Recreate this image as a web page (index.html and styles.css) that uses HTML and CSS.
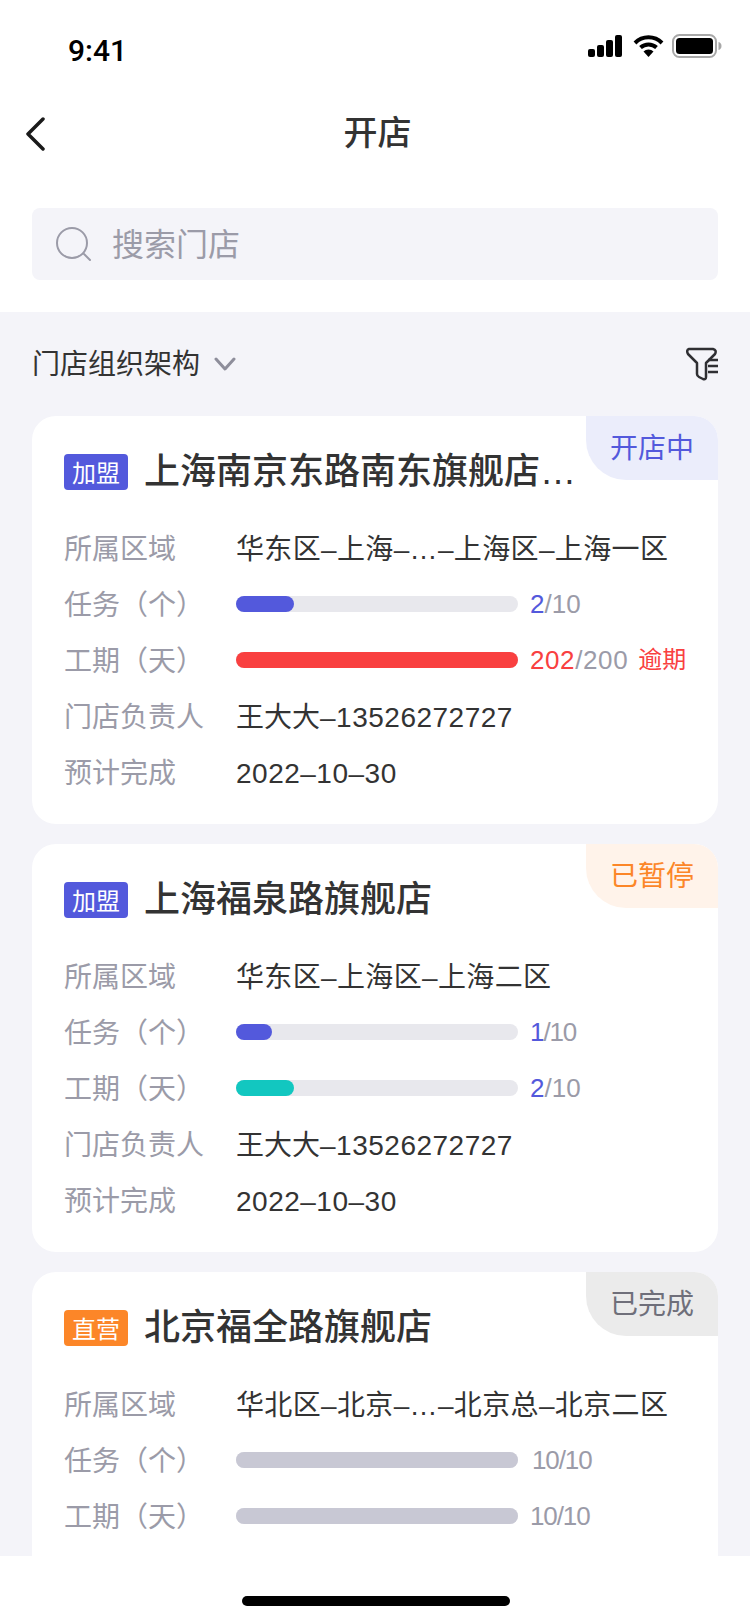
FILE: index.html
```html
<!DOCTYPE html>
<html lang="zh-CN">
<head>
<meta charset="UTF-8">
<meta name="viewport" content="width=device-width, initial-scale=1.0">
<title>开店</title>
<link rel="stylesheet" href="styles.css">
</head>
<body>
<div class="page">
  <div class="status-bar">
    <span class="time">9:41</span>
    <div class="status-icons">
      <svg width="35" height="22" viewBox="0 0 35 22"><rect x="0" y="14" width="7" height="8" rx="2"/><rect x="9" y="10" width="7" height="12" rx="2"/><rect x="18" y="5" width="7" height="17" rx="2"/><rect x="27" y="0" width="7" height="22" rx="2"/></svg>
      <svg width="31" height="22" viewBox="0 0 31 22"><path d="M2 8 A19 19 0 0 1 29 8" fill="none" stroke="#000" stroke-width="4"/><path d="M7.500 12.500 A12 12 0 0 1 23.500 12.500" fill="none" stroke="#000" stroke-width="4"/><path d="M10.500 16.500 L15.500 22 L20.500 16.500 A7 7 0 0 0 10.500 16.500 Z"/></svg>
      <svg class="battery" width="50" height="24" viewBox="0 0 50 24"><rect x="1" y="1" width="43" height="22" rx="6.500" fill="none" stroke="#a8a8a8" stroke-width="2"/><rect x="4" y="4" width="37" height="16" rx="3.500"/><path d="M46.500 8 C48.500 8.500 49.500 10 49.500 12 C49.500 14 48.500 15.500 46.500 16 Z" fill="#a8a8a8"/></svg>
    </div>
  </div>

  <div class="nav-bar">
    <svg class="back" width="20" height="34" viewBox="0 0 20 34"><path d="M18 2 L3 17 L18 32" fill="none" stroke="#1a1a1a" stroke-width="3.500" stroke-linecap="round" stroke-linejoin="round"/></svg>
    <h1>开店</h1>
  </div>

  <div class="search-wrap">
    <div class="search">
      <svg width="36" height="34" viewBox="0 0 36 34"><circle cx="16" cy="16" r="15" fill="none" stroke="#9b9ba8" stroke-width="2"/><path d="M28 27 L34 33" stroke="#9b9ba8" stroke-width="2" stroke-linecap="round"/></svg>
      <span>搜索门店</span>
    </div>
  </div>

  <div class="content">
    <div class="filter-row">
      <div class="org">
        <span>门店组织架构</span>
        <svg width="22" height="14" viewBox="0 0 22 14"><path d="M2 2 L11 12 L20 2" fill="none" stroke="#8e8e9b" stroke-width="3" stroke-linecap="round" stroke-linejoin="round"/></svg>
      </div>
      <svg width="32" height="34" viewBox="0 0 32 34"><path d="M3 2 H27 Q31 3 29 7 L20 16 V30 Q20 33 17 32 L13 30 Q11 29 11 27 V16 L2 7 Q0 3 3 2 Z" fill="none" stroke="#2f2f33" stroke-width="2.500" stroke-linejoin="round"/><path d="M22 13 H32 M22 19 H32 M22 25 H32" stroke="#2f2f33" stroke-width="2.500" fill="none"/></svg>
    </div>

    <div class="card">
      <span class="state state-open">开店中</span>
      <div class="card-title">
        <span class="badge badge-join">加盟</span>
        <h2>上海南京东路南东旗舰店…</h2>
      </div>
      <div class="row"><span class="label">所属区域</span><span class="value value-area">华东区–上海–…–上海区–上海一区</span></div>
      <div class="row">
        <span class="label">任务（个）</span>
        <div class="bar"><div class="fill fill-blue" style="width: 58px"></div></div>
        <span class="count"><em class="blue">2</em>/10</span>
      </div>
      <div class="row">
        <span class="label">工期（天）</span>
        <div class="bar"><div class="fill fill-red" style="width: 100%"></div></div>
        <span class="count count-wide"><em class="red">202</em>/200</span>
        <span class="late">逾期</span>
      </div>
      <div class="row"><span class="label">门店负责人</span><span class="value">王大大<span class="num">–13526272727</span></span></div>
      <div class="row"><span class="label">预计完成</span><span class="value"><span class="num">2022–10–30</span></span></div>
    </div>

    <div class="card">
      <span class="state state-paused">已暂停</span>
      <div class="card-title">
        <span class="badge badge-join">加盟</span>
        <h2>上海福泉路旗舰店</h2>
      </div>
      <div class="row"><span class="label">所属区域</span><span class="value value-area">华东区–上海区–上海二区</span></div>
      <div class="row">
        <span class="label">任务（个）</span>
        <div class="bar"><div class="fill fill-blue" style="width: 36px"></div></div>
        <span class="count count-narrow"><em class="blue">1</em>/10</span>
      </div>
      <div class="row">
        <span class="label">工期（天）</span>
        <div class="bar"><div class="fill fill-teal" style="width: 58px"></div></div>
        <span class="count"><em class="blue">2</em>/10</span>
      </div>
      <div class="row"><span class="label">门店负责人</span><span class="value">王大大<span class="num">–13526272727</span></span></div>
      <div class="row"><span class="label">预计完成</span><span class="value"><span class="num">2022–10–30</span></span></div>
    </div>

    <div class="card">
      <span class="state state-done">已完成</span>
      <div class="card-title">
        <span class="badge badge-direct">直营</span>
        <h2>北京福全路旗舰店</h2>
      </div>
      <div class="row"><span class="label">所属区域</span><span class="value value-area">华北区–北京–…–北京总–北京二区</span></div>
      <div class="row">
        <span class="label">任务（个）</span>
        <div class="bar"><div class="fill fill-grey" style="width: 100%"></div></div>
        <span class="count count-narrow count-done">10/10</span>
      </div>
      <div class="row">
        <span class="label">工期（天）</span>
        <div class="bar"><div class="fill fill-grey" style="width: 100%"></div></div>
        <span class="count count-narrow">10/10</span>
      </div>
    </div>
  </div>

  <div class="home-bar"><div class="home-indicator"></div></div>
</div>
</body>
</html>
```

FILE: styles.css
```css
* {
  box-sizing: border-box;
}

body {
  margin: 0;
  font-family: "Liberation Sans", "Noto Sans CJK SC", sans-serif;
  background-color: #fff;
}

.page {
  display: flex;
  flex-direction: column;
  width: 750px;
  height: 1624px;
  overflow: hidden;
}

.status-bar {
  display: flex;
  justify-content: space-between;
  align-items: center;
  height: 88px;
  padding: 12px 28px 0 68px;
}

.time {
  font-family: Roboto, sans-serif;
  font-size: 30px;
  font-weight: 500;
  color: #000;
}

.status-icons {
  display: flex;
  align-items: center;
  gap: 10px;
  margin-top: -9px;
}

.battery {
  margin-left: -2px;
}

.nav-bar {
  position: relative;
  display: flex;
  justify-content: center;
  align-items: center;
  height: 88px;
  padding-left: 5px;
}

.back {
  position: absolute;
  left: 25px;
  top: 29px;
}

h1 {
  margin: 2px 0 0;
  font-size: 34px;
  line-height: 44px;
  font-weight: 500;
  color: #333;
}

.search-wrap {
  padding: 32px;
}

.search {
  display: flex;
  align-items: center;
  gap: 20px;
  height: 72px;
  padding-left: 24px;
  background-color: #f4f4f9;
  border-radius: 8px;
}

.search span {
  padding-top: 2px;
  font-size: 32px;
  line-height: 44px;
  color: #9b9ba8;
}

.content {
  flex: 1;
  min-height: 0;
  overflow: hidden;
  padding: 0 32px;
  background-color: #f4f4f9;
}

.filter-row {
  display: flex;
  justify-content: space-between;
  align-items: center;
  height: 104px;
}

.org {
  display: flex;
  align-items: center;
  gap: 14px;
  font-size: 28px;
  line-height: 40px;
  color: #333;
}

.org span {
  padding-top: 2px;
}

.card {
  position: relative;
  height: 408px;
  margin-bottom: 20px;
  padding: 38px 32px 0;
  background-color: #fff;
  border-radius: 24px;
}

.state {
  position: absolute;
  top: 0;
  right: 0;
  display: flex;
  justify-content: center;
  align-items: center;
  width: 132px;
  height: 64px;
  padding-top: 2px;
  font-size: 28px;
  line-height: 40px;
  border-radius: 0 24px 0 40px;
}

.state-open {
  color: #5359dc;
  background-color: #ebedfb;
}

.state-paused {
  color: #fc8628;
  background-color: #fff3ea;
}

.state-done {
  color: #6f6f7a;
  background-color: #ebebeb;
}

.card-title {
  display: flex;
  align-items: center;
  gap: 16px;
  height: 36px;
  margin-bottom: 29px;
}

.badge {
  display: flex;
  justify-content: center;
  align-items: center;
  width: 64px;
  height: 36px;
  padding-top: 4px;
  font-size: 24px;
  line-height: 32px;
  color: #fff;
  border-radius: 4px;
}

.badge-join {
  background-color: #5359dc;
}

.badge-direct {
  background-color: #fc8628;
}

h2 {
  margin: 0;
  font-size: 36px;
  line-height: 48px;
  font-weight: 500;
  color: #333;
  white-space: nowrap;
}

.row {
  display: flex;
  align-items: center;
  height: 56px;
  line-height: 40px;
}

.label {
  flex: none;
  width: 172px;
  padding-top: 6px;
  font-size: 28px;
  color: #9b9ba8;
}

.value {
  padding-top: 5px;
  font-size: 28px;
  color: #333;
  white-space: nowrap;
}

.value-area {
  letter-spacing: 0.35px;
}

.num {
  letter-spacing: 0.5px;
}

.bar {
  flex: none;
  width: 282px;
  height: 16px;
  margin-top: 2px;
  background-color: #e8e8ed;
  border-radius: 8px;
}

.fill {
  height: 100%;
  border-radius: 8px;
}

.fill-blue {
  background-color: #5359dc;
}

.fill-red {
  background-color: #f94040;
}

.fill-teal {
  background-color: #12c7c0;
}

.fill-grey {
  background-color: #c8c8d4;
}

.count {
  flex: none;
  margin-left: 12px;
  padding-top: 2px;
  font-size: 26px;
  color: #9b9ba8;
}

.count-wide {
  letter-spacing: 0.6px;
}

.count-narrow {
  letter-spacing: -1.1px;
}

.count-done {
  margin-left: 14px;
}

.count em {
  font-style: normal;
}

.blue {
  color: #5359dc;
}

.red {
  color: #f94040;
}

.late {
  flex: none;
  margin-left: 10px;
  padding-top: 2px;
  font-size: 24px;
  color: #f94040;
  white-space: nowrap;
}

.home-bar {
  display: flex;
  justify-content: center;
  flex: none;
  height: 68px;
  padding: 40px 0 0 2px;
  background-color: #fff;
}

.home-indicator {
  width: 268px;
  height: 10px;
  background-color: #000;
  border-radius: 5px;
}
```
